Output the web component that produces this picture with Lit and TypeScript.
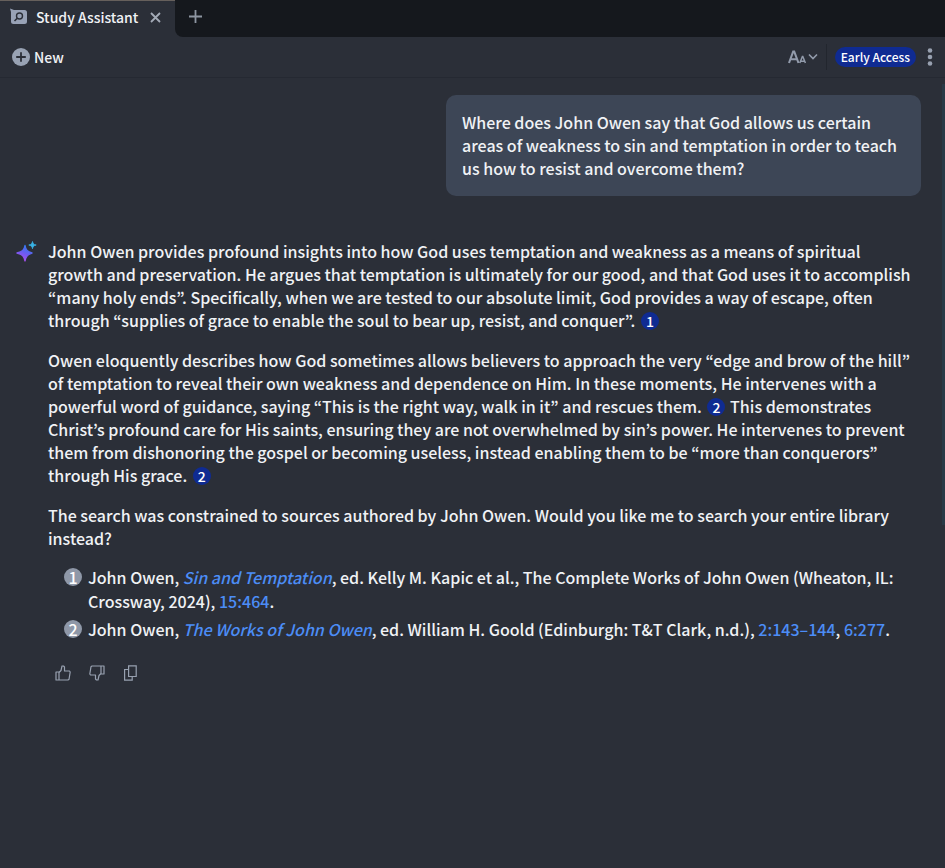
import { LitElement, html, css } from "lit";
import { customElement } from "lit/decorators.js";

@customElement("cite-mark")
class CiteMark extends LitElement {
  static properties = { n: { type: Number } };
  declare n: number;
  static styles = css`
    :host { display: inline-block; vertical-align: top; height: 23px; }
    a {
      display: block; width: 18px; height: 18px; margin: 3px 1px 0 2px; border-radius: 50%;
      background: #0f2b92; color: #fff; text-decoration: none; text-align: center;
      font-size: 14px; line-height: 18px;
    }
  `;
  render() {
    return html`<a href="#source-${this.n}">${this.n}</a>`;
  }
}

@customElement("app-root")
class AppRoot extends LitElement {
  static styles = css`
    :host {
      display: flex; flex-direction: column; min-height: 100vh;
      background: #2b2f38; color: #f0f2f5;
      font-family: "Noto Sans CJK KR", "Noto Sans", sans-serif;
      font-weight: 500; font-size: 16px; line-height: 23px;
    }
    * { box-sizing: border-box; }
    button {
      display: flex; align-items: center; padding: 0; border: 0;
      background: none; color: inherit; font: inherit; cursor: pointer;
    }
    svg { display: block; flex: none; }
    .tabs { display: flex; height: 37px; background: #15181d; }
    .tab {
      display: flex; align-items: center; width: 175px; padding: 0 14px 4px 10px;
      border-top: 1px solid #66605c; background: #2b2f38;
      font-size: 14px;
    }
    .tab .name { flex: 1; margin-left: 8px; }
    .rest { flex: 1; background: #2b2f38; }
    .well {
      display: flex; height: 100%; padding: 0 0 4px 14px;
      border-bottom-left-radius: 8px; background: #15181d;
    }
    .bar {
      display: flex; align-items: center; height: 41px; padding: 0 8px 0 12px;
      border-bottom: 1px solid #252932; font-size: 14px;
    }
    .new { gap: 4px; }
    .right { display: flex; align-items: center; margin-left: auto; }
    .divider { width: 1px; height: 26px; margin: 0 8px; background: #22262e; }
    .badge {
      height: 20px; padding: 0 6px; border-radius: 10px; margin-right: 7px;
      background: #0f2b92; color: #fff; font-size: 12px; line-height: 20px;
    }
    .scroll { display: flex; flex: 1; }
    main { flex: 1; padding: 17px 21px 24px 16px; }
    .thumb { width: 3px; height: 441px; margin-top: 6px; background: #293946; }
    .bubble {
      width: 475px; max-width: 100%; margin: 0 0 0 auto; padding: 16px;
      border-radius: 10px; background: #3d4656;
    }
    .answer { display: flex; gap: 11px; margin-top: 44px; }
    .body { flex: 1; padding-right: 4px; }
    p { margin: 0 0 17px; }
    .body p:last-of-type { margin-bottom: 15px; }
    ol { margin: 0; padding: 0 0 0 16px; list-style: none; line-height: 24px; }
    li { display: flex; gap: 6px; margin-bottom: 4px; }
    .num {
      flex: none; width: 18px; height: 18px; margin-top: 3px; border-radius: 50%;
      background: #8f98a8; color: #fff; line-height: 18px; text-align: center;
    }
    .src { color: #4c8df6; text-decoration: none; }
    .title { font-style: italic; }
    .actions { display: flex; gap: 18px; margin: 24px 0 0 7px; }
  `;

  render() {
    return html`
      <nav class="tabs">
        <div class="tab">
          <svg width="18" height="18" viewBox="0 0 18 18">
            <path d="M0 .5 4 2h10.500a2.500 2.500 0 0 1 2.500 2.500v9a2.500 2.500 0 0 1-2.500 2.500h-11A2.500 2.500 0 0 1 1 13.500V4Z" fill="#98a2b6"/>
            <circle cx="9.500" cy="8" r="3" fill="none" stroke="#2b2f38" stroke-width="1.400"/>
            <path d="M7.500 10 4.500 13" stroke="#2b2f38" stroke-width="1.600"/>
          </svg>
          <span class="name">Study Assistant</span>
          <button aria-label="Close tab">
            <svg width="11" height="11" viewBox="0 0 11 11"><path d="M1 1l9 9M10 1l-9 9" stroke="#a3aab6" stroke-width="1.800"/></svg>
          </button>
        </div>
        <div class="rest"><div class="well">
          <button aria-label="New tab">
            <svg width="13" height="13" viewBox="0 0 13 13"><path d="M6.500 0v13M0 6.500h13" stroke="#8d95a1" stroke-width="1.800"/></svg>
          </button>
        </div></div>
      </nav>
      <header class="bar">
        <button class="new">
          <svg width="18" height="18" viewBox="0 0 18 18"><circle cx="9" cy="9" r="9" fill="#98a2b3"/><path d="M9 4.200v9.600M4.200 9h9.600" stroke="#2b2f38" stroke-width="1.800"/></svg>
          New
        </button>
        <div class="right">
          <button aria-label="Text size">
            <svg width="30" height="16" viewBox="0 0 30 16" fill="none" stroke="#929bab">
              <path d="M1 14 5.200 2.500h1L10.500 14M2.700 10.300h6" stroke-width="2.100"/>
              <path d="M11.800 14 14.400 7.500h.4l2.600 6.500M13 12.200h3.200" stroke-width="1.500"/>
              <path d="M21 5.500l4 4 4-4" stroke-width="1.600"/>
            </svg>
          </button>
          <span class="divider"></span>
          <button class="badge">Early Access</button>
          <button aria-label="More">
            <svg width="14" height="18" viewBox="0 0 14 18" fill="#98a1b0"><circle cx="7" cy="2.500" r="2.300"/><circle cx="7" cy="9" r="2.300"/><circle cx="7" cy="15.500" r="2.300"/></svg>
          </button>
        </div>
      </header>
      <div class="scroll">
        <main>
          <p class="bubble">Where does John Owen say that God allows us certain areas of weakness to sin and temptation in order to teach us how to resist and overcome them?</p>
          <section class="answer">
            <svg width="21" height="23" viewBox="0 0 21 23">
              <defs>
                <linearGradient id="spark" x1="0.300" y1="1" x2="0.700" y2="0"><stop offset="0" stop-color="#b04df0"/><stop offset=".5" stop-color="#6b5cf2"/><stop offset="1" stop-color="#2f7df2"/></linearGradient>
              </defs>
              <path d="M9 5.500C9.800 10 11.300 12 16 13 11.300 14.200 9.800 16.300 9 20.800 8.200 16.300 6.500 14.200 1 13 6.500 12 8.200 10 9 5.500Z" fill="url(#spark)" stroke="url(#spark)" stroke-width="1.400" stroke-linejoin="round"/>
              <path d="M16.500 1.500C17 4 17.800 4.600 20.200 5 17.800 5.600 17 6.300 16.500 8.700 16 6.300 15.200 5.600 12.800 5 15.200 4.600 16 4 16.500 1.500Z" fill="#38b2e4" stroke="#38b2e4" stroke-width=".8"/>
            </svg>
            <div class="body">
              <p>John Owen provides profound insights into how God uses temptation and weakness as a means of spiritual growth and preservation. He argues that temptation is ultimately for our good, and that God uses it to accomplish “many holy ends”. Specifically, when we are tested to our absolute limit, God provides a way of escape, often through “supplies of grace to enable the soul to bear up, resist, and conquer”. <cite-mark n="1"></cite-mark></p>
              <p>Owen eloquently describes how God sometimes allows believers to approach the very “edge and brow of the hill” of temptation to reveal their own weakness and dependence on Him. In these moments, He intervenes with a powerful word of guidance, saying “This is the right way, walk in it” and rescues them. <cite-mark n="2"></cite-mark> This demonstrates Christ’s profound care for His saints, ensuring they are not overwhelmed by sin’s power. He intervenes to prevent them from dishonoring the gospel or becoming useless, instead enabling them to be “more than conquerors” through His grace. <cite-mark n="2"></cite-mark></p>
              <p>The search was constrained to sources authored by John Owen. Would you like me to search your entire library instead?</p>
              <ol>
                <li id="source-1"><span class="num">1</span><span>John Owen, <a class="src title" href="#">Sin and Temptation</a>, ed. Kelly M. Kapic et al., The Complete Works of John Owen (Wheaton, IL: Crossway, 2024), <a class="src" href="#">15:464</a>.</span></li>
                <li id="source-2"><span class="num">2</span><span>John Owen, <a class="src title" href="#">The Works of John Owen</a>, ed. William H. Goold (Edinburgh: T&amp;T Clark, n.d.), <a class="src" href="#">2:143–144</a>, <a class="src" href="#">6:277</a>.</span></li>
              </ol>
              <div class="actions">
                <button aria-label="Good answer">
                  <svg width="16" height="16" viewBox="0 0 16 16" fill="none" stroke="#98a1b0" stroke-width="1.200" stroke-linejoin="round"><path d="M1 7h3v8H1zM4 7.500 6 5.500 7 1h1.500L9.500 2V6h5L15.200 7 14 14.300 13 15H4"/></svg>
                </button>
                <button aria-label="Bad answer">
                  <svg width="16" height="16" viewBox="0 0 16 16" fill="none" stroke="#98a1b0" stroke-width="1.200" stroke-linejoin="round"><path d="M12 1h3v8h-3zM12 8.500 10 10.500 9 15H7.500L6.500 14V10h-5L.8 9 2 1.700 3 1h9"/></svg>
                </button>
                <button aria-label="Copy">
                  <svg width="16" height="16" viewBox="0 0 16 16" fill="none" stroke="#98a1b0" stroke-width="1.200"><path d="M5.600.8h7.600v10.700H5.600z"/><path d="M5.600 4.500H1.600v10.700h7.600v-3.700"/></svg>
                </button>
              </div>
            </div>
          </section>
        </main>
        <div class="thumb"></div>
      </div>
    `;
  }
}
